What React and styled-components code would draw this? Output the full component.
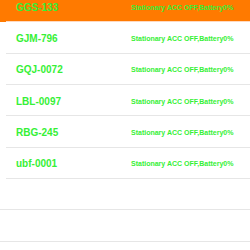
import React from "react";
import styled, { createGlobalStyle } from "styled-components";

const GlobalStyle = createGlobalStyle`
    html, body {
        margin: 0;
        padding: 0;
        background: #ffffff;
        font-family: "Liberation Sans", Arial, sans-serif;
    }
`;

const Screen = styled.div`
    width: 250px;
    height: 250px;
    overflow: hidden;
    background: #ffffff;
`;

const List = styled.div`
    display: flex;
    flex-direction: column;
    margin-top: -9px; /* scrolled a little */
`;

const Row = styled.div`
    display: grid;
    grid-template-columns: 115px 1fr;
    align-items: center;
    height: 31.33px;
    box-sizing: border-box;
    padding-left: 16px;
    padding-top: 1px;
    background: ${(p) => (p.$active ? "#ff7a00" : "#ffffff")};
    position: relative;

    &::after {
        content: "";
        position: absolute;
        left: ${(p) => (p.$empty ? "0" : "6px")};
        right: 0;
        bottom: 0;
        height: 1px;
        background: ${(p) => (p.$active ? "#ffd9c0" : "#e6e6e6")};
    }
`;

const Plate = styled.span`
    font-size: 10px;
    font-weight: bold;
    color: #36f036;
    white-space: nowrap;
`;

const Status = styled.span`
    font-size: 7px;
    font-weight: bold;
    color: #36f036;
    white-space: nowrap;
`;

const cars = [
    { plate: "GGS-133", status: "Stationary ACC OFF,Battery0%" },
    { plate: "GJM-796", status: "Stationary ACC OFF,Battery0%" },
    { plate: "GQJ-0072", status: "Stationary ACC OFF,Battery0%" },
    { plate: "LBL-0097", status: "Stationary ACC OFF,Battery0%" },
    { plate: "RBG-245", status: "Stationary ACC OFF,Battery0%" },
    { plate: "ubf-0001", status: "Stationary ACC OFF,Battery0%" },
];

const App = () => {
    return (
        <Screen>
            <GlobalStyle />
            <List>
                {cars.map((car, index) => (
                    <Row key={car.plate} $active={index === 0}>
                        <Plate>{car.plate}</Plate>
                        <Status>{car.status}</Status>
                    </Row>
                ))}
                <Row $empty />
                <Row $empty />
                <Row $empty />
            </List>
        </Screen>
    );
};

export default App;
